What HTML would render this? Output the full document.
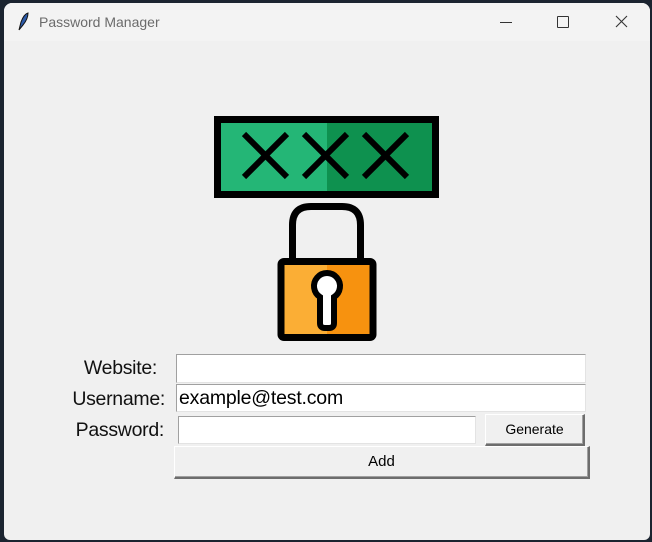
<!DOCTYPE html>
<html><head><style>
body{margin:0;width:652px;height:542px;background:#1b2430;position:relative;overflow:hidden;font-family:"Liberation Sans",sans-serif}
.win{position:absolute;left:4px;top:3px;width:646px;height:537px;background:#f0f0f0;border-radius:8px 8px 6px 6px;overflow:hidden}
.tb{position:absolute;left:0;top:0;width:100%;height:38px;background:#f3f3f3}
.t{position:absolute;left:35px;top:11px;font-size:14px;color:#6b6b6b}
.a{position:absolute}
.lbl{position:absolute;font-size:19.5px;color:#111;text-align:right;letter-spacing:-0.3px}
.ent{position:absolute;background:#fff;border-top:1px solid #a0a0a0;border-left:1px solid #a0a0a0;border-bottom:1px solid #e3e3e3;border-right:1px solid #e3e3e3;box-sizing:border-box;font-size:19.5px;color:#000;padding-left:2px;line-height:26px;letter-spacing:-0.2px}
.btn{position:absolute;background:#f0f0f0;border:1px solid #fff;border-right:2px solid #6d6d6d;border-bottom:2px solid #6d6d6d;box-shadow:inset -1px -1px 0 #a0a0a0;box-sizing:border-box;font-size:14px;text-align:center;color:#000}
</style></head><body>
<div class="win">
<div class="tb">
<svg class="a" style="left:12px;top:9px" width="14" height="20" viewBox="0 0 14 20"><path d="M3 18 L5 10 Q8 2 12 1 Q12 7 7 13 Z" fill="#2c5aa8" stroke="#111" stroke-width="1"/></svg>
<div class="t">Password Manager</div>
<div class="a" style="left:496px;top:19px;width:12px;height:1px;background:#333"></div>
<div class="a" style="left:553px;top:13px;width:10px;height:10px;border:1px solid #333;border-radius:1px"></div>
<svg class="a" style="left:611px;top:12px" width="13" height="13"><path d="M1 1L12 12M12 1L1 12" stroke="#333" stroke-width="1.1"/></svg>
</div>
</div>
<svg class="a" style="left:0;top:0" width="652" height="542">
<rect x="217.5" y="119.5" width="218" height="75" fill="#24b676"/>
<rect x="327" y="119.5" width="108.5" height="75" fill="#0e914f"/>
<rect x="217.5" y="119.5" width="218" height="75" fill="none" stroke="#000" stroke-width="7"/>
<g stroke="#000" stroke-width="6">
<path d="M244 134L287 177M287 134L244 177"/>
<path d="M304 134L347 177M347 134L304 177"/>
<path d="M364 134L407 177M407 134L364 177"/>
</g>
<path d="M292.5 260 V225 Q292.5 206.5 311 206.5 H342 Q360.5 206.5 360.5 225 V260" fill="none" stroke="#000" stroke-width="7"/>
<rect x="281" y="261.5" width="92" height="76" rx="3" fill="#fbae35"/>
<rect x="327" y="261.5" width="46" height="76" fill="#f7920f"/>
<rect x="281" y="261.5" width="92" height="76" rx="3" fill="none" stroke="#000" stroke-width="7"/>
<path d="M320 297 A13 13 0 1 1 334 297 V323 Q334 328 329 328 H325 Q320 328 320 323 Z" fill="#fff" stroke="#000" stroke-width="6"/>
</svg>
<div class="lbl" style="left:30px;top:357px;width:127px">Website:</div>
<div class="lbl" style="left:30px;top:388px;width:135px">Username:</div>
<div class="lbl" style="left:30px;top:419px;width:134px">Password:</div>
<div class="ent" style="left:176px;top:354px;width:410px;height:29px"></div>
<div class="ent" style="left:176px;top:384px;width:410px;height:28px">example@test.com</div>
<div class="ent" style="left:178px;top:416px;width:298px;height:28px"></div>
<div class="btn" style="left:485px;top:414px;width:100px;height:32px;line-height:29px">Generate</div>
<div class="btn" style="left:174px;top:446px;width:416px;height:33px;line-height:30px;font-size:15px">Add</div>
</body></html>
